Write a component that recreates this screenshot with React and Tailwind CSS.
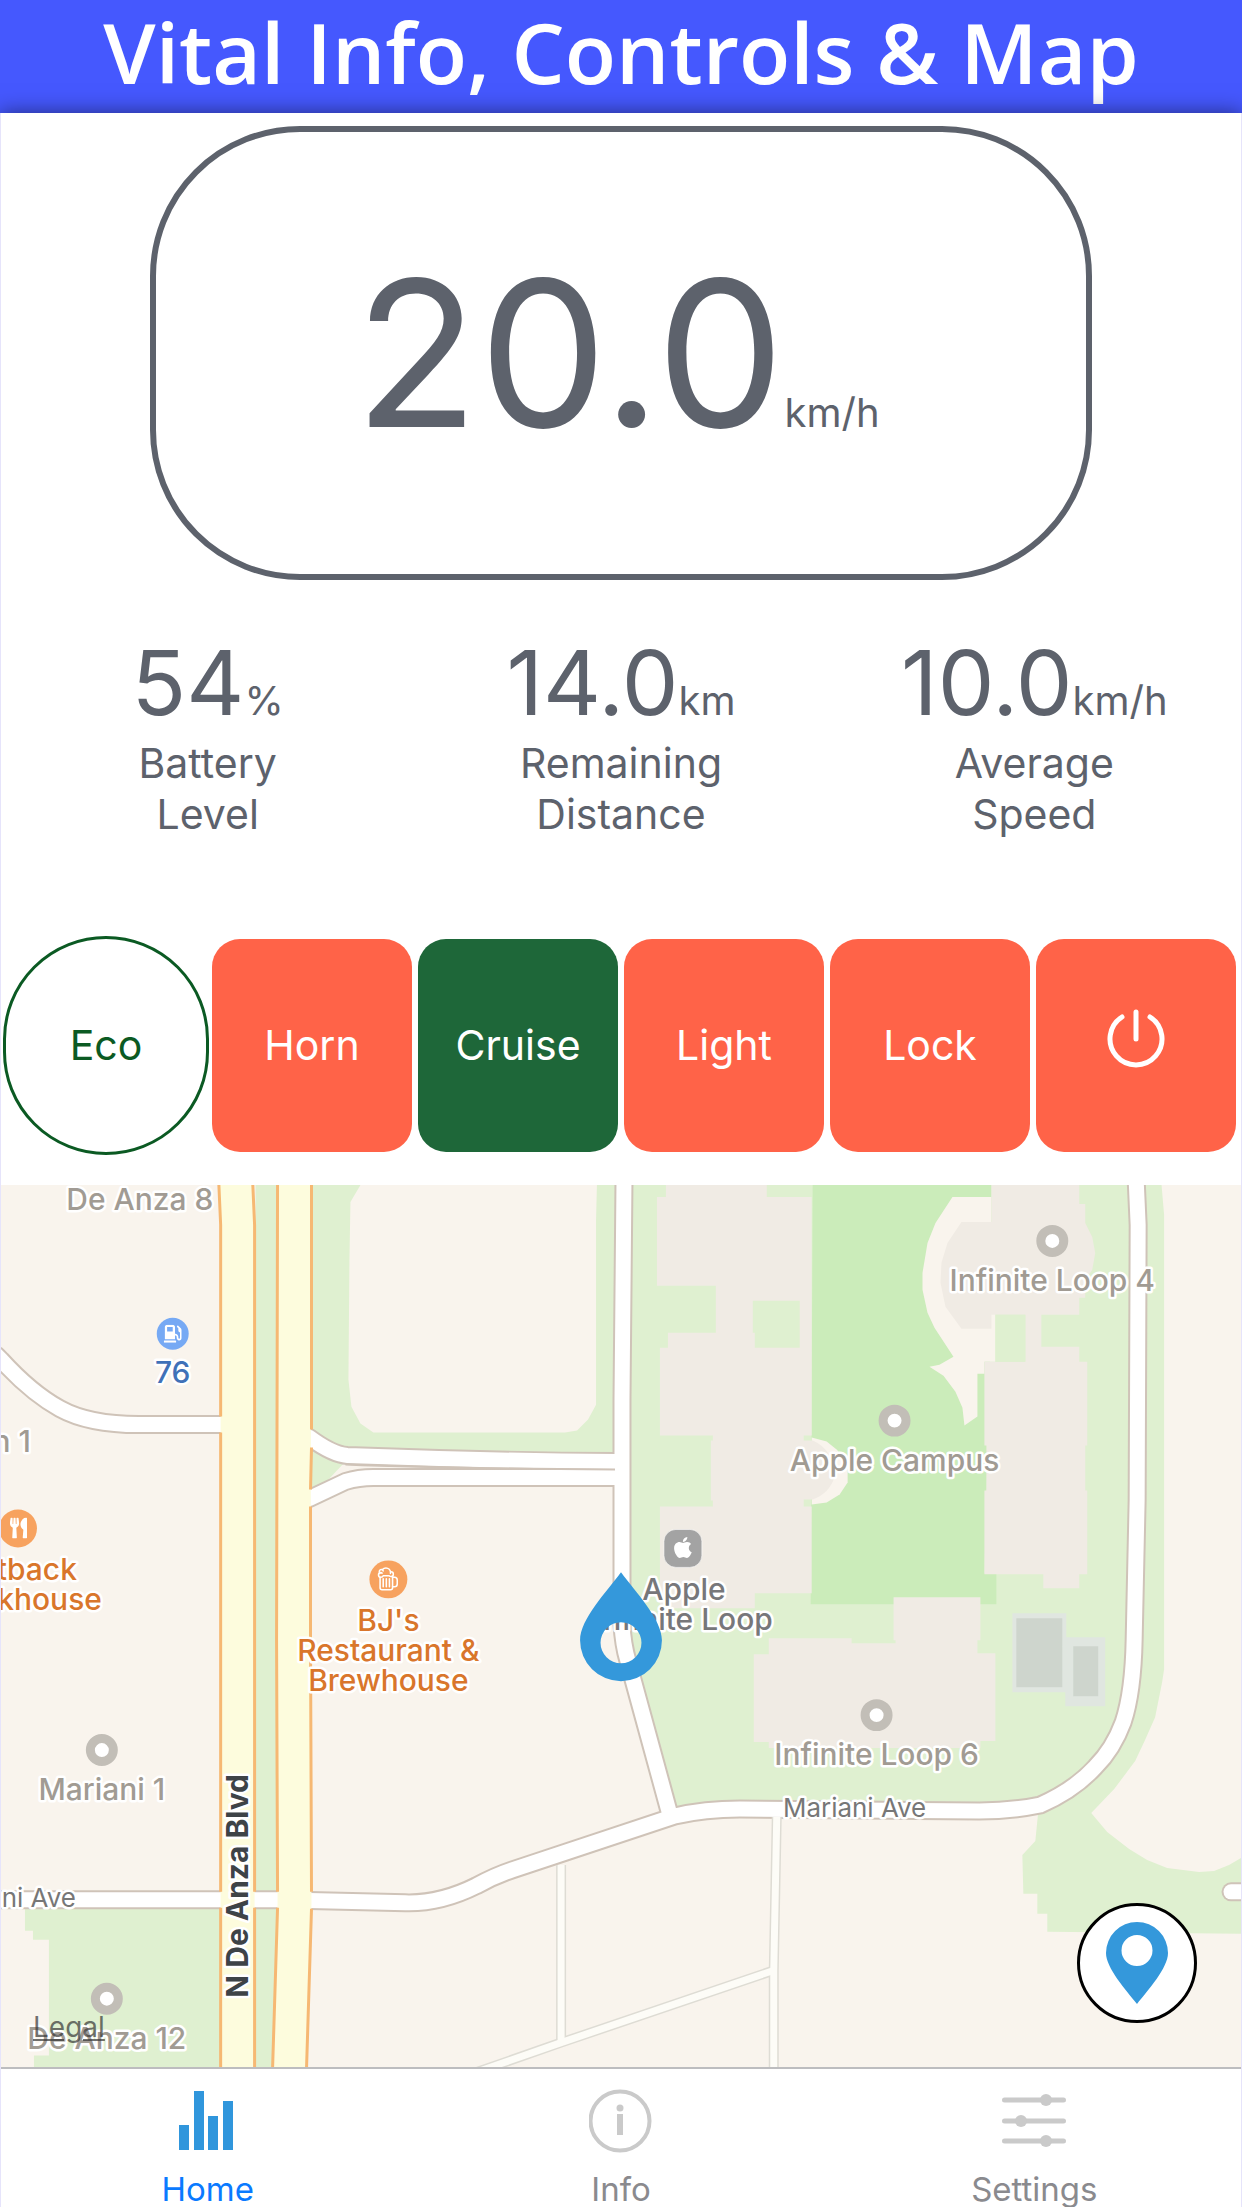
import { useState } from 'react'
import clsx from 'clsx'
import { FaApple, FaGasPump, FaUtensils } from 'react-icons/fa'
import { IoBeerOutline } from 'react-icons/io5'

const STATS = [
  { value: '54',   unit: '%',    label: ['Battery', 'Level'] },
  { value: '14.0', unit: 'km',   label: ['Remaining', 'Distance'] },
  { value: '10.0', unit: 'km/h', label: ['Average', 'Speed'] },
]

const CONTROLS = [
  { id: 'Horn',   on: false },
  { id: 'Cruise', on: true },
  { id: 'Light',  on: false },
  { id: 'Lock',   on: false },
]

const TABS = [
  { id: 'Home',     Icon: BarsIcon },
  { id: 'Info',     Icon: InfoIcon },
  { id: 'Settings', Icon: SlidersIcon },
]

const PLACES = [
  { x: 1053, y: 1241, label: 'Infinite Loop 4' },
  { x: 895,  y: 1421, label: 'Apple Campus' },
  { x: 877,  y: 1716, label: 'Infinite Loop 6' },
  { x: 101,  y: 1751, label: 'Mariani 1' },
  { x: 106,  y: 2000, label: 'De Anza 12' },
]

const ROADS = [
  'M-4 1356 L0 1360 Q30 1393 59 1409 Q88 1425 138 1425 L222 1425',
  'M309 1438 Q332 1455 347 1456 Q480 1461 616 1462',
  'M309 1499 L345 1482 Q358 1478 373 1478 L616 1478',
  'M624 1180 L622 1400 L622 1625 Q623 1645 628 1662 L669 1812',
  'M-4 1901 L277 1901 L405 1904 Q440 1905 476 1887 Q494 1877 512 1871 L675 1817 Q705 1810 740 1810 L980 1812 Q1012 1812 1041 1806 Q1075 1791 1096 1768 Q1114 1750 1124 1723 Q1134 1693 1135 1640 L1138 1500 L1139 1225 L1137 1180',
  'M1232 1893 L1250 1893',
]

const FOOTPATHS = [
  'M561 1866 L561 2043',
  'M777 1818 L774 1972 L774 2075',
  'M773 1972 L561 2044 L475 2074',
]

function BarsIcon() {
  return (
    <svg viewBox="0 0 64 64" className="w-16 h-16" fill="#3096dc" aria-hidden="true">
      <rect x="3" y="36" width="10" height="25" />
      <rect x="18" y="2" width="10" height="59" />
      <rect x="32" y="27" width="10" height="34" />
      <rect x="47" y="12" width="10" height="49" />
    </svg>
  )
}

function InfoIcon() {
  return (
    <svg viewBox="0 0 64 64" className="w-16 h-16" aria-hidden="true">
      <circle cx="31" cy="32" r="29.5" fill="none" stroke="#cacaca" strokeWidth="4" />
      <circle cx="31" cy="19" r="3.5" fill="#cacaca" />
      <path d="M31 25v21" stroke="#cacaca" strokeWidth="6" />
    </svg>
  )
}

function SlidersIcon() {
  return (
    <svg viewBox="0 0 64 64" className="w-16 h-16" aria-hidden="true">
      <path d="M2.5 11h59M2.5 32h59M2.5 52h59" stroke="#cacaca" strokeWidth="5" strokeLinecap="round" />
      <g fill="#cacaca">
        <circle cx="44" cy="11" r="6" />
        <circle cx="19" cy="32" r="6" />
        <circle cx="44" cy="52" r="6" />
      </g>
    </svg>
  )
}

function PowerIcon() {
  return (
    <svg viewBox="0 0 60 60" className="w-15 h-15" fill="none" stroke="#fff" strokeWidth="5" strokeLinecap="round" aria-hidden="true">
      <path d="M16 9a26 26 0 1 0 28 0" />
      <path d="M30 4v27" />
    </svg>
  )
}

function MapLabel({ x, y, className = 'font-medium', children, ...rest }) {
  return (
    <text x={x} y={y} textAnchor="middle" stroke="#fff" strokeWidth="5" strokeLinejoin="round" paintOrder="stroke"
      className={className} {...rest}>{children}</text>
  )
}

function CampusMap() {
  return (
    <svg viewBox="0 1185 1242 883" className="block w-full text-[30px]" role="img" aria-label="Map">
      <rect y="1180" width="1242" height="900" fill="#f9f4ed" />

      {/* lawns */}
      <g fill="#dff0d0">
        <path d="M310 1180H622V1462H345L311 1498Z" />
        <path d="M255 1180H277V2070H255Z" />
        <path d="M24 1905V1932H32V1941H48V2057H33V2070H220V1905Z" />
        <path d="M624 1180H1162L1165 1215V1670L1163 1683L1156 1718L1145 1743L1136 1762L1115 1790L1092 1814L1108 1833L1130 1850L1148 1861L1168 1869L1200 1873L1215 1872L1230 1866L1242 1859V1935L1048 1933V1915H1038V1895H1024L1023 1856L1036 1842L1039 1812L740 1810L669 1814L628 1662L622 1625Z" />
      </g>
      <path fill="#f9f4ed" d="M363 1180L350 1202L349 1260L348 1380L351 1407L360 1424L373 1433H565L577 1431L588 1420L596 1405V1220L597 1180Z" />
      <path fill="#cbecba" d="M813 1180H992V1300L985 1574H997V1605H811Z" />

      {/* plazas */}
      <g fill="#f9f4ed">
        <path d="M812 1438L827 1442L837 1450L848 1463V1483L840 1495L827 1503L812 1505Z" />
        <path d="M953 1197H992V1222H996V1362H985V1374H978V1417L965 1426L963 1408L956 1392L944 1376L930 1367L940 1365L954 1357L935 1328L928 1313L923 1290V1273L928 1243L936 1223Z" />
      </g>

      {/* buildings */}
      <g fill="#f0ebe4">
        <path d="M666 1180V1197H657V1286H716V1333H668V1348H660V1436H713V1441H711V1501H713V1507H660V1609H755V1594H812V1507H804V1500H813Q830 1494 835 1477Q834 1450 813 1441H804V1436H812V1197H767V1180Z" />
        <path fillRule="evenodd" d="M992 1180H1080V1204H1086V1223L1093 1237L1096 1253L1093 1270L1086 1280V1298H1080V1315H1042V1347H1080V1362H1088V1446H1086V1491H1088V1575H1080V1589H1044V1575H985V1491H987V1446H985V1362H1026V1315H992V1329H962L946 1307L941 1283L942 1263L948 1243L962 1222H992Z" />
        <path d="M894 1598H981V1641H978V1654H996V1742H981V1749H769V1743H754V1655H769V1639H852V1644H896V1641H894Z" />
      </g>
      <path fill="#dff0d0" d="M753 1301H800V1348H755V1333H753ZM996 1315H1026V1362H996Z" />
      <path fill="#e0e6e0" d="M1013 1614H1067V1693H1013ZM1066 1638H1106V1707H1066Z" />
      <path fill="#ced5cd" d="M1017 1619H1063V1688H1017ZM1074 1647H1099V1697H1074Z" />

      {/* streets */}
      <g fill="none">
        {ROADS.map(d => <path key={d} d={d} stroke="#cfc3b8" strokeWidth="19" strokeLinecap="round" />)}
        {FOOTPATHS.map(d => <path key={d} d={d} stroke="#dedcd4" strokeWidth="10" />)}
        {FOOTPATHS.map(d => <path key={d} d={d} stroke="#fdfcf7" strokeWidth="7" />)}
        {ROADS.map(d => <path key={d} d={d} stroke="#fff" strokeWidth="15" strokeLinecap="round" />)}
        <path d="M345 1465Q440 1469 615 1470" stroke="#cfc3b8" strokeWidth="2" />
      </g>
      <g fill="#fdfcdd">
        <path d="M218 1180L220 1225V2070H254V1225L252 1180Z" />
        <path d="M277 1180L276 1640L277 1905L272 2070H306L311 1905L310 1640L311 1180Z" />
      </g>
      <g fill="none" stroke="#f6b873" strokeWidth="3">
        <path d="M218 1180L220 1225V1417M220 1433V1893M220 1909V2070" />
        <path d="M252 1180L254 1225V1893M254 1909V2070" />
        <path d="M277 1180L276 1640L277 1893M277 1909L272 2070" />
        <path d="M311 1180V1430M311 1448L310 1490M310 1507V1640L311 1893M311 1910L306 2070" />
      </g>

      {/* places */}
      {PLACES.map(p => (
        <g key={p.label}>
          <circle cx={p.x} cy={p.y} r="11.5" fill="#fff" stroke="#c2beb7" strokeWidth="9" />
          <MapLabel x={p.x} y={p.y + 50} fill="#a19b93">{p.label}</MapLabel>
        </g>
      ))}
      <MapLabel x="139" y="1210" fill="#a19b93">De Anza 8</MapLabel>
      <MapLabel x="30" y="1452" textAnchor="end" fill="#a19b93">n 1</MapLabel>

      <circle cx="172" cy="1334" r="16" fill="#76a9f4" />
      <FaGasPump x="163" y="1325" size={18} color="#fff" />
      <MapLabel x="172" y="1383" fill="#3f71b8">76</MapLabel>

      <g fill="#d9762b">
        <circle cx="17" cy="1529" r="19" fill="#f7a25f" />
        <FaUtensils x="7" y="1518" size={21} color="#fff" />
        <MapLabel x="76" y="1581" textAnchor="end">tback</MapLabel>
        <MapLabel x="101" y="1611" textAnchor="end">khouse</MapLabel>

        <circle cx="388" cy="1580" r="19" fill="#f7a25f" />
        <IoBeerOutline x="375" y="1567" size={25} color="#fff" />
        <MapLabel x="388" y="1632">BJ's</MapLabel>
        <MapLabel x="388" y="1662">Restaurant &amp;</MapLabel>
        <MapLabel x="388" y="1692">Brewhouse</MapLabel>
      </g>

      <rect x="664" y="1530" width="38" height="38" rx="12" fill="#a3a3a3" stroke="#fff" strokeOpacity=".6" />
      <FaApple x="671" y="1536" size={24} color="#fff" />
      <MapLabel x="684" y="1601" fill="#77777a">Apple</MapLabel>
      <MapLabel x="684" y="1631" fill="#77777a">Infinite Loop</MapLabel>

      <MapLabel x="855" y="1818" fill="#777" className="text-[26px]">Mariani Ave</MapLabel>
      <MapLabel x="75" y="1908" textAnchor="end" fill="#777" className="text-[26px]">ni Ave</MapLabel>
      <MapLabel x="-1887" y="247" fill="#3e4347" transform="rotate(-90)" className="text-[30px] font-bold">N De Anza Blvd</MapLabel>

      {/* scooter position */}
      <path fill="#3498db" fillRule="evenodd" d="M621 1573C607 1592 580 1620 580 1641A41 41 0 0 0 662 1641C662 1620 635 1592 621 1573ZM621 1623A20.500 20.500 0 1 1 621 1664A20.500 20.500 0 1 1 621 1623Z" />
    </svg>
  )
}

export default function App() {
  const [tab, setTab] = useState('Home')

  return (
    <div className="bg-white font-['Inter','Liberation_Sans',sans-serif] text-[#5d626c]">
      <header className="bg-[#4558fe] text-white text-center pb-[10px]">
        <h1 className="font-['Open_Sans','Noto_Sans',sans-serif] font-semibold text-[84px] leading-[103px]">Vital Info, Controls &amp; Map</h1>
      </header>

      <main className="relative bg-white border-x border-[#e6e4fb] shadow-[0_0_20px_rgba(0,0,0,0.5)]">
        <div className="pt-[13px]">
          <section className="mx-[149px] h-[454px] border-6 border-[#5d626c] rounded-[150px] flex items-center justify-center">
            <p className="flex items-baseline leading-none pr-2">
              <span className="text-[204px]">20.0</span>
              <span className="text-[40px]">km/h</span>
            </p>
          </section>
        </div>

        <dl className="grid grid-cols-3 mt-12 text-center">
          {STATS.map(s => (
            <div key={s.value} className="flex flex-col-reverse justify-end">
              <dt className="text-[41px] leading-[51px]">{s.label[0]}<br />{s.label[1]}</dt>
              <dd className="flex items-baseline justify-center">
                <span className="text-[90px] leading-[110px]">{s.value}</span>
                <span className="text-[40px] leading-none">{s.unit}</span>
              </dd>
            </div>
          ))}
        </dl>

        <div className="grid grid-cols-6 px-[2px] mt-24 mb-[30px] text-[41px]">
          <button className="h-[219px] rounded-[104px] border-3 border-[#0b5a23] text-[#0b5a23]">Eco</button>
          {CONTROLS.map(c => (
            <button key={c.id} aria-pressed={c.on} className={clsx('m-[3px] rounded-[28px] text-white', c.on ? 'bg-[#1e6739]' : 'bg-[#ff6348]')}>{c.id}</button>
          ))}
          <button aria-label="Power" className="m-[3px] pb-4 rounded-[28px] bg-[#ff6348] flex items-center justify-center"><PowerIcon /></button>
        </div>

        <div className="relative">
          <CampusMap />
          <a href="#legal" className="absolute left-8 bottom-6 text-[28px] leading-8 underline text-[#333]/70">Legal</a>
          <button aria-label="Show my location" className="absolute right-11 bottom-11 w-30 h-30 rounded-full bg-white border-3 border-black flex items-center justify-center">
            <svg viewBox="0 0 62 82" className="h-[82px]" aria-hidden="true">
              <path fill="#3498db" fillRule="evenodd" d="M31 0A31 31 0 0 0 0 31C0 46 20 68 31 82C42 68 62 46 62 31A31 31 0 0 0 31 0ZM31 13A15.500 15.500 0 1 1 31 44A15.500 15.500 0 1 1 31 13Z" />
            </svg>
          </button>
        </div>

        <nav className="grid grid-cols-3 border-t-2 border-[#bdbdbf] pt-5">
          {TABS.map(({ id, Icon }) => (
            <button key={id} onClick={() => setTab(id)} className={clsx('flex flex-col items-center gap-[18px] text-[33px] leading-9', tab === id ? 'text-[#0a7aff]' : 'text-[#8a8a8e]')}>
              <Icon />
              {id}
            </button>
          ))}
        </nav>
      </main>
    </div>
  )
}
